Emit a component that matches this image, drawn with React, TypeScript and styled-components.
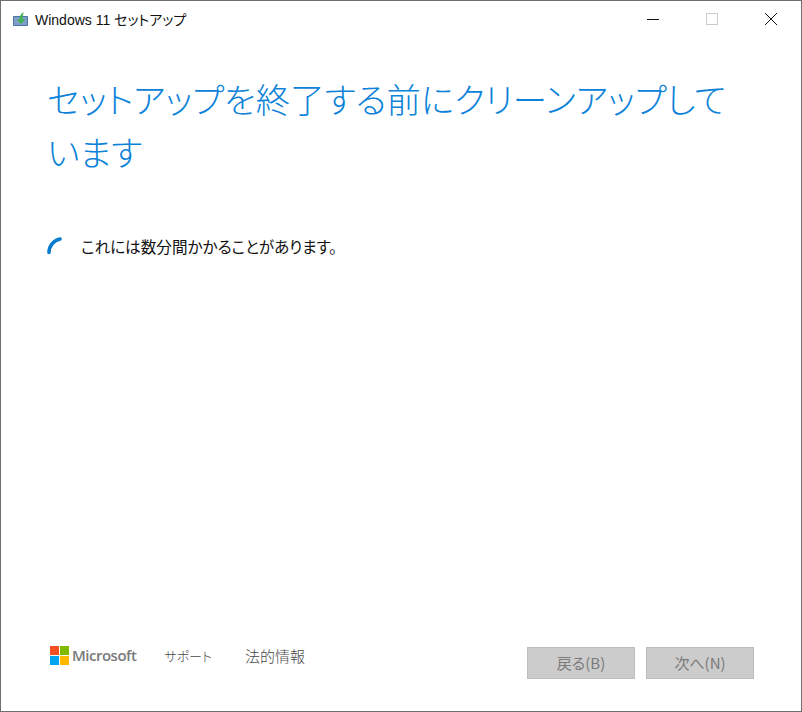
import React from "react";
import styled, { createGlobalStyle } from "styled-components";

const Global = createGlobalStyle`
  html, body { margin: 0; padding: 0; background: #fff; }
  * { box-sizing: border-box; }
`;
const FONT = `"Noto Sans CJK JP", "Noto Sans", sans-serif`;

const Win = styled.div`
  width: 802px; height: 712px; display: flex; flex-direction: column;
  border: 1px solid #6f6f6f; background: #fff; font-family: ${FONT}; overflow: hidden;
  font-feature-settings: "palt";
`;
const TitleBar = styled.div`
  height: 36px; flex: none; display: flex; align-items: center; padding: 0 1px 0 11px;
`;
const AppIcon = styled.svg`width: 18px; height: 18px; flex: none;`;
const TitleText = styled.div`
  font-family: "Liberation Sans", "Noto Sans CJK JP", sans-serif;
  margin-left: 5px; font-size: 14px; color: #111; flex: 1;
`;
const WinBtn = styled.div`
  width: 59px; height: 36px; display: flex; align-items: center; justify-content: center;
`;
const Main = styled.div`
  flex: 1; padding: 35px 60px 0 46px; display: flex; flex-direction: column;
`;
const Heading = styled.h1`
  margin: 0; font-weight: 300; font-size: 34.4px; line-height: 53px; color: #0c82d9;
  font-family: ${FONT};
`;
const StatusRow = styled.div`
  display: flex; align-items: center; margin-top: 58px; gap: 14px;
`;
const Spinner = styled.svg`width: 20px; height: 20px; flex: none; margin-top: -3px;`;
const StatusText = styled.div`font-size: 15.6px; color: #111; line-height: 20px;`;
const Footer = styled.div`
  flex: none; height: 75px; padding: 7px 47px 0 49px; display: flex; align-items: flex-start;
`;
const Brand = styled.div`display: flex; align-items: center; height: 24px; gap: 3px;`;
const Logo = styled.svg`width: 19px; height: 19px; flex: none;`;
const BrandName = styled.span`
  font-family: "Open Sans", "Liberation Sans", sans-serif; font-weight: 600; font-size: 15px;
  letter-spacing: -0.5px; color: #7a7a7a;
`;
const FootLink = styled.span<{ $gap: number; $size: number }>`
  font-size: ${(p) => p.$size}px; color: #484848; line-height: 26px; font-weight: 300;
  margin-left: ${(p) => p.$gap}px;
`;
const Spacer = styled.div`flex: 1;`;
const NavBtn = styled.div<{ $gap: number }>`
  width: 108px; height: 32px; margin-top: 4px; margin-left: ${(p) => p.$gap}px; padding-bottom: 2px;
  background: #cccccc; border: 1px solid #bdbdbd; color: #7a7a7a; font-size: 15px;
  display: flex; align-items: center; justify-content: center;
`;

export default function App() {
  return (
    <>
      <Global />
      <Win>
        <TitleBar>
          <AppIcon viewBox="0 0 18 18">
            <rect x="1" y="6" width="15" height="10" rx="1" fill="#4d74a8" />
            <rect x="2" y="7" width="13" height="8" fill="#7f9fc6" />
            <path d="M9 14 L5 9.5 H7.5 C7.5 6 9 3.5 12 2 C10.8 4 10.5 6.5 10.5 9.5 H13 Z" fill="#3fb34f" />
          </AppIcon>
          <TitleText>Windows 11 セットアップ</TitleText>
          <WinBtn>
            <svg width="12" height="12" viewBox="0 0 12 12"><path d="M0 6.5H12" stroke="#111" strokeWidth="1" /></svg>
          </WinBtn>
          <WinBtn>
            <svg width="12" height="12" viewBox="0 0 12 12"><rect x=".5" y=".5" width="11" height="11" fill="none" stroke="#ccc" /></svg>
          </WinBtn>
          <WinBtn>
            <svg width="12" height="12" viewBox="0 0 12 12"><path d="M0 0L12 12M12 0L0 12" stroke="#111" strokeWidth="1" /></svg>
          </WinBtn>
        </TitleBar>
        <Main>
          <Heading>セットアップを終了する前にクリーンアップしています</Heading>
          <StatusRow>
            <Spinner viewBox="0 0 20 20">
              <path d="M2 17.5 C2 11 6.5 5.5 13 4" fill="none" stroke="#0a7cd0" strokeWidth="3.6" strokeLinecap="round" />
            </Spinner>
            <StatusText>これには数分間かかることがあります。</StatusText>
          </StatusRow>
        </Main>
        <Footer>
          <Brand>
            <Logo viewBox="0 0 20 20">
              <rect x="0" y="0" width="9.5" height="9.5" fill="#f25022" />
              <rect x="10.5" y="0" width="9.5" height="9.5" fill="#7fba00" />
              <rect x="0" y="10.5" width="9.5" height="9.5" fill="#00a4ef" />
              <rect x="10.5" y="10.5" width="9.5" height="9.5" fill="#ffb900" />
            </Logo>
            <BrandName>Microsoft</BrandName>
          </Brand>
          <FootLink $gap={28} $size={13}>サポート</FootLink>
          <FootLink $gap={33} $size={15}>法的情報</FootLink>
          <Spacer />
          <NavBtn $gap={0}>戻る(B)</NavBtn>
          <NavBtn $gap={11}>次へ(N)</NavBtn>
        </Footer>
      </Win>
    </>
  );
}
